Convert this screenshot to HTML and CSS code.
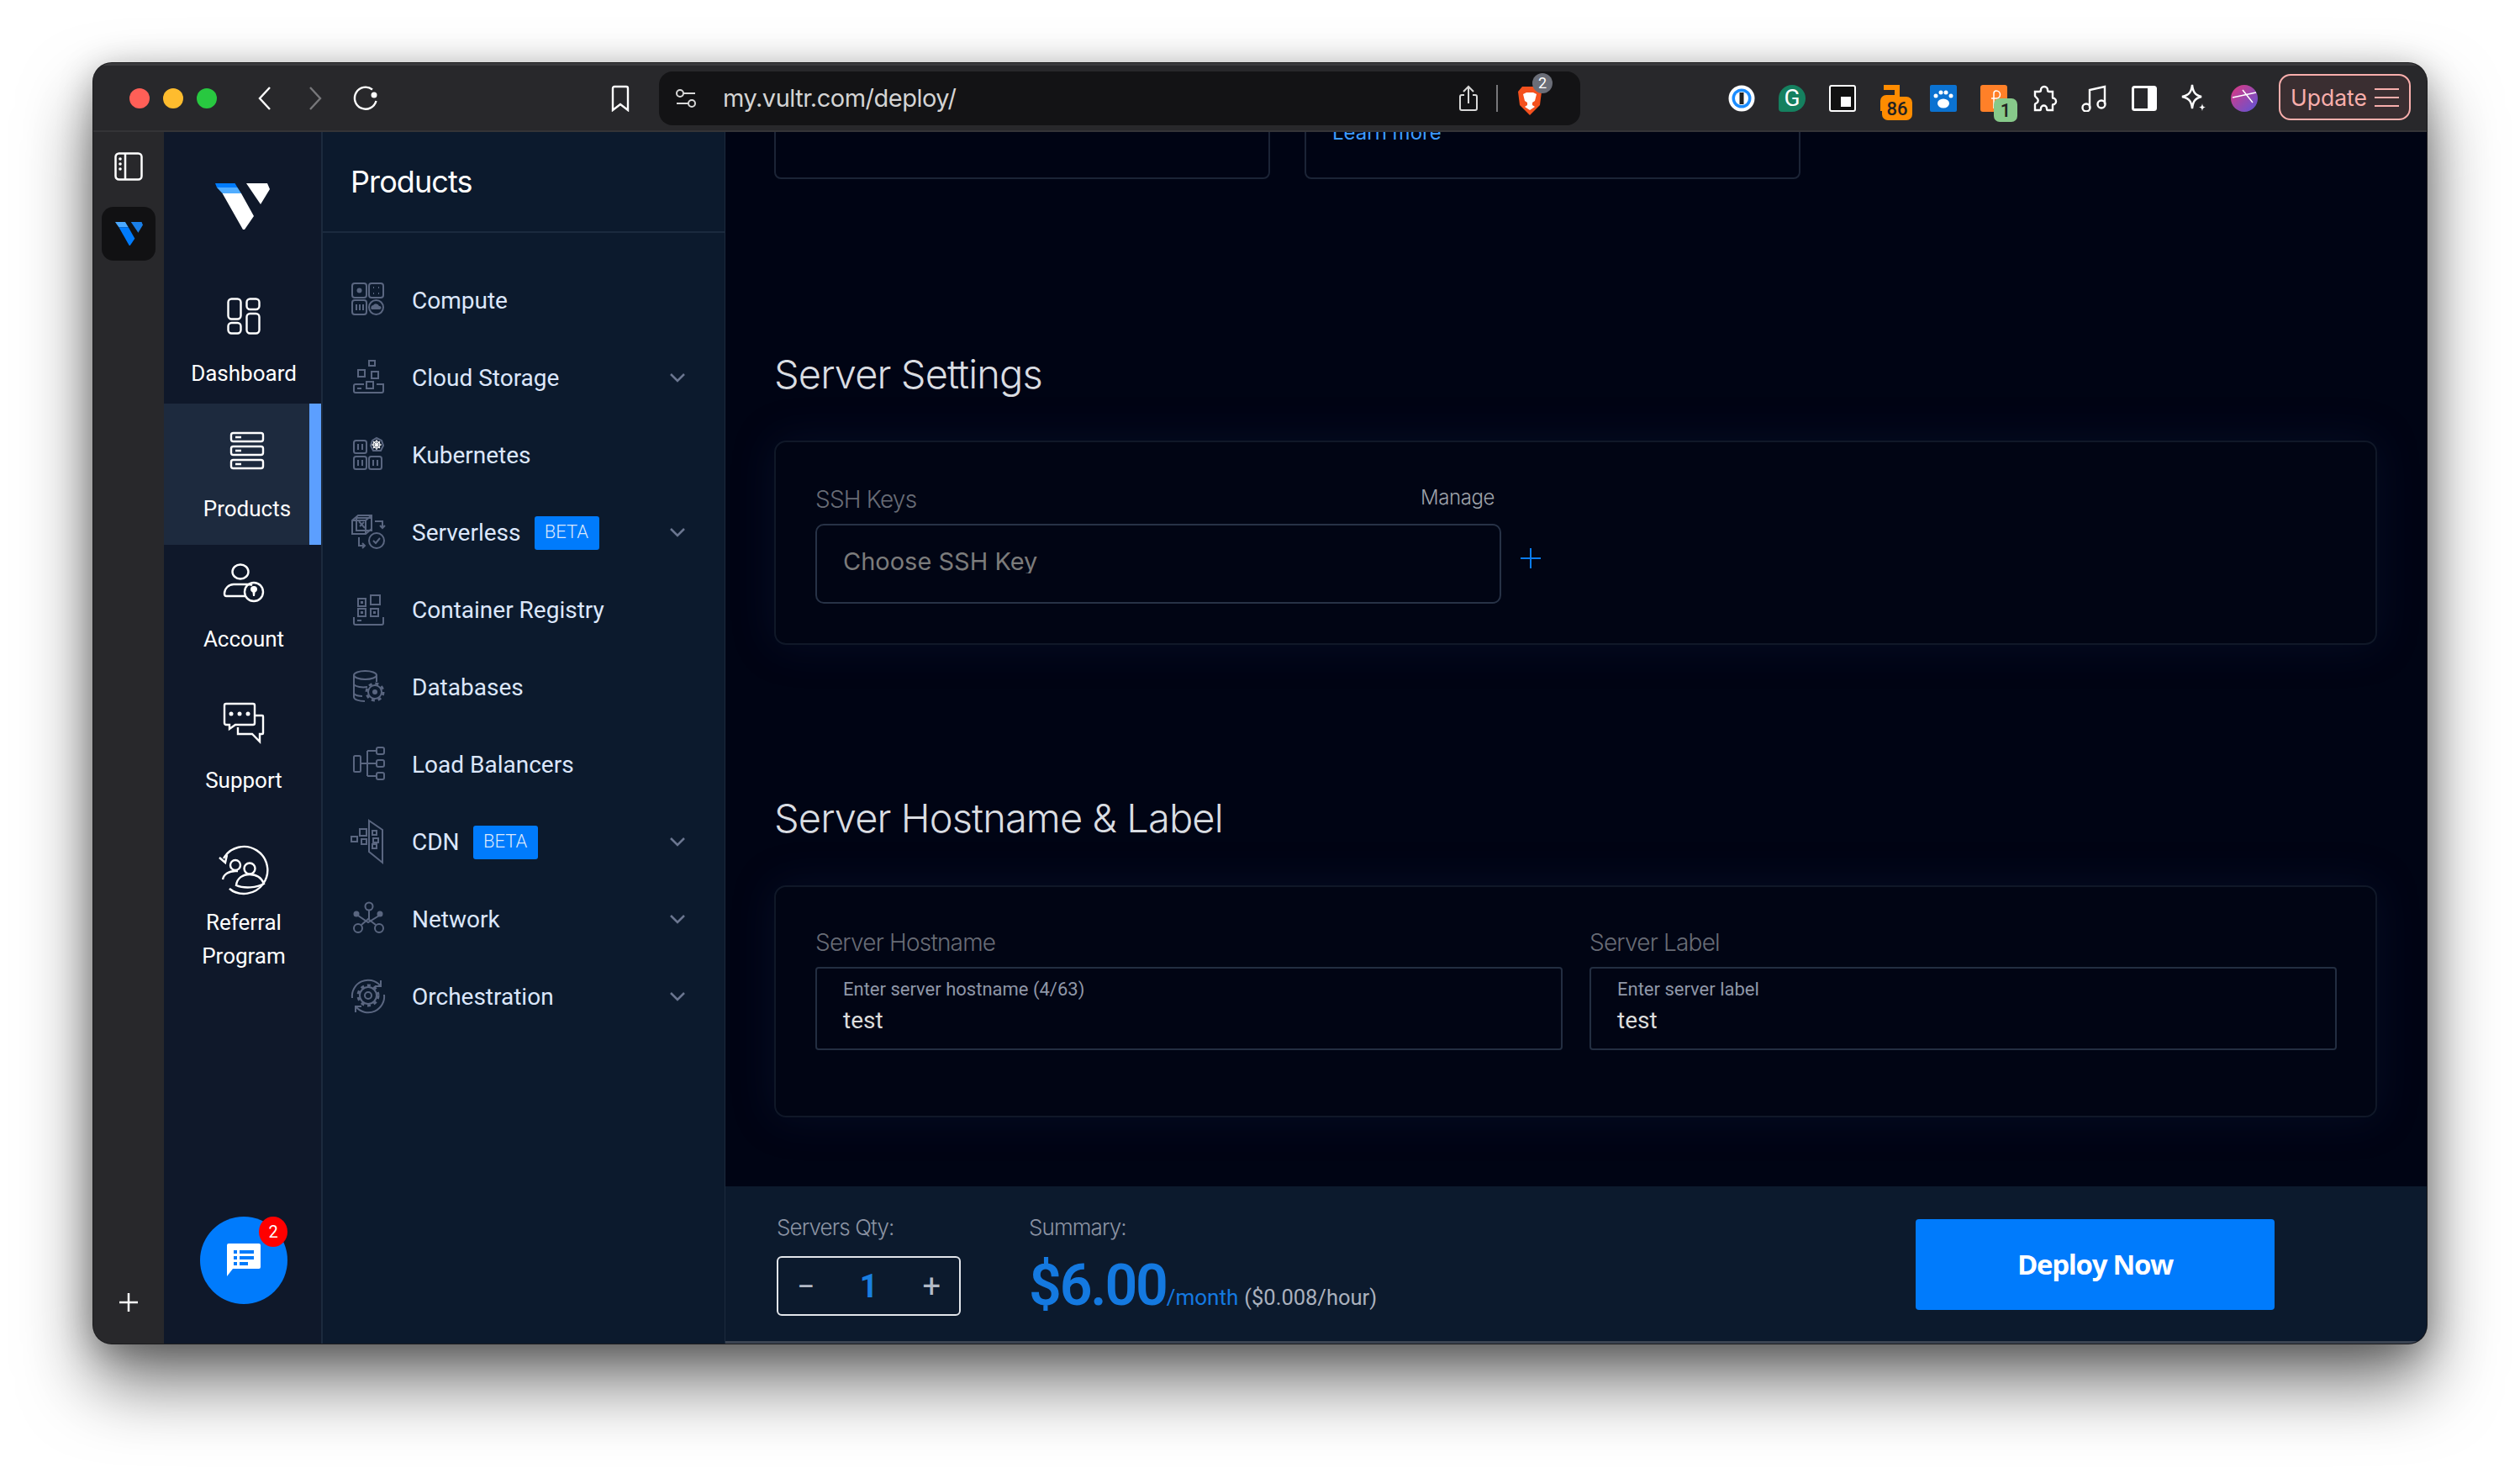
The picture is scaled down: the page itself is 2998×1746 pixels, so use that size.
FILE: index.html
```html
<!DOCTYPE html>
<html>
<head>
  <meta charset="utf-8">
  <meta name="viewport" content="width=device-width">
  <title>Deploy</title>
  <link rel="stylesheet" href="styles.css">
</head>
<body>
  <section class="window">
    <header class="toolbar">
      <div class="lights">
        <span class="light light_red"></span>
        <span class="light light_yellow"></span>
        <span class="light light_green"></span>
      </div>
      <svg class="tool tool_back" width="18" height="30" viewBox="0 0 18 30"><path d="M15 2L3 15l12 13"/></svg>
      <svg class="tool tool_forward" width="18" height="30" viewBox="0 0 18 30"><path d="M3 2l12 13L3 28"/></svg>
      <svg class="tool tool_reload" width="32" height="32" viewBox="0 0 32 32"><path d="M24 5.5A13 13 0 1 0 28.500 19"/><circle class="fill" cx="26" cy="12" r="3.500"/></svg>
      <svg class="tool tool_bookmark" width="24" height="32" viewBox="0 0 24 32"><path d="M3 4a2 2 0 0 1 2-2h14a2 2 0 0 1 2 2v26l-9-7-9 7z"/></svg>
      <div class="urlbar">
        <svg class="tool" width="26" height="24" viewBox="0 0 26 24"><circle cx="6" cy="6" r="4"/><path d="M10 6h14M2 18h14"/><circle cx="20" cy="18" r="4"/></svg>
        <span class="url">my.vultr.com/deploy/</span>
        <svg class="tool tool_share" width="24" height="32" viewBox="0 0 24 32"><path d="M7 12H4a2 2 0 0 0-2 2v14a2 2 0 0 0 2 2h16a2 2 0 0 0 2-2V14a2 2 0 0 0-2-2h-3M12 22V2M6 8l6-6 6 6"/></svg>
        <span class="urlbar_sep"></span>
        <span class="brave">
          <svg width="32" height="36" viewBox="0 0 32 36"><path fill="#f4511e" d="M7 1h18l5 6-2 16-12 12L4 23 2 7z"/><path fill="#fff" d="M8 10l4-2h8l4 2-2 8-3 2v3l3 2-6 4-6-4 3-2v-3l-3-2z"/></svg>
          <span class="brave_count">2</span>
        </span>
      </div>
      <div class="extensions">
        <svg class="ext" width="32" height="32" viewBox="0 0 32 32"><circle cx="16" cy="16" r="15.500" fill="#fff"/><circle cx="16" cy="16" r="11.500" fill="#1a8cff"/><circle cx="16" cy="16" r="8" fill="#fff"/><rect x="13.500" y="9" width="5" height="14" fill="#222"/></svg>
        <span class="ext ext_grammarly">G</span>
        <svg class="ext" width="32" height="32" viewBox="0 0 32 32"><rect x="1" y="1" width="30" height="30" rx="2" fill="#111" stroke="#fff" stroke-width="2"/><rect x="14" y="14" width="12" height="12" fill="#fff"/></svg>
        <span class="ext ext_rss">
          <svg width="26" height="34" viewBox="0 0 26 34"><path fill="none" stroke="#ff8c00" stroke-width="6" d="M5 3h16v12H8a4 4 0 0 0-4 4v12"/></svg>
          <span class="ext_badge ext_badge_orange">86</span>
        </span>
        <svg class="ext" width="32" height="32" viewBox="0 0 32 32"><rect width="32" height="32" rx="2" fill="#0b72d1"/><ellipse cx="16" cy="22" rx="7" ry="5.500" fill="#fff"/><circle cx="7" cy="13" r="2.500" fill="#fff"/><circle cx="13" cy="9" r="2.500" fill="#fff"/><circle cx="19" cy="9" r="2.500" fill="#fff"/><circle cx="25" cy="13" r="2.500" fill="#fff"/></svg>
        <span class="ext ext_orange">
          <svg width="32" height="32" viewBox="0 0 32 32"><rect width="32" height="32" rx="3" fill="#ff8028"/><path fill="none" stroke="#fff" stroke-width="1.500" d="M16 28V10a3 3 0 0 1 3-3 3 3 0 0 1 0 9h-6"/></svg>
          <span class="ext_badge ext_badge_green">1</span>
        </span>
        <svg class="ext tool" width="32" height="32" viewBox="0 0 32 32"><path d="M12 6a4 4 0 0 1 8 0c0 1 1 2 2 2h4v7c0 1 1 1 2 1a4 4 0 0 1 0 7c-1 0-2 0-2 1v6h-6c-1 0-1-1-1-2a3.500 3.500 0 0 0-7 0c0 1 0 2-1 2H5v-7c0-1 1-1 2-1.500a3.500 3.500 0 0 0 0-6C6 14 5 14 5 13V8h5c1 0 2-1 2-2z"/></svg>
        <svg class="ext tool" width="32" height="32" viewBox="0 0 32 32"><circle cx="6" cy="27" r="4.500"/><circle cx="24" cy="23" r="4.500"/><path d="M10 27V6l18-4v21"/></svg>
        <svg class="ext" width="30" height="30" viewBox="0 0 30 30"><rect x="1.500" y="1.500" width="27" height="27" rx="2" fill="none" stroke="#fff" stroke-width="3"/><rect x="19" y="1.500" width="9.500" height="27" fill="#fff"/></svg>
        <svg class="ext tool" width="32" height="36" viewBox="0 0 32 36"><path d="M14 2c1 8 3 12 11 14-8 2-10 6-11 14-1-8-3-12-12-14C11 14 13 10 14 2z"/><path class="fill" d="M26 24c.5 3 1 4 4 4.500-3 .5-3.500 1.500-4 5-.5-3.500-1-4.500-4-5 3-.5 3.500-1.500 4-4.500z"/></svg>
        <svg class="ext" width="32" height="32" viewBox="0 0 32 32"><defs><linearGradient id="av" x1="0" y1="0" x2="1" y2="1"><stop offset="0" stop-color="#e0387f"/><stop offset="1" stop-color="#5a55d8"/></linearGradient></defs><circle cx="16" cy="16" r="16" fill="url(#av)"/><path d="M2 15L30 9M14 6l12 15" stroke="#fff" stroke-width="1.500" fill="none"/></svg>
      </div>
      <div class="update">
        <span>Update</span>
        <span class="update_lines"><i></i><i></i><i></i></span>
      </div>
    </header>

    <div class="body">
      <aside class="strip">
        <svg class="strip_toggle" width="34" height="34" viewBox="0 0 34 34"><rect x="1.500" y="1.500" width="31" height="31" rx="4"/><path d="M13 2v30"/><circle class="dot" cx="7" cy="8" r="1.800"/><circle class="dot" cx="7" cy="14" r="1.800"/><circle class="dot" cx="7" cy="20" r="1.800"/></svg>
        <div class="strip_tab">
          <svg width="33" height="28" viewBox="0 0 65 55"><path fill="#4aa8ff" d="M0 0h23.500L31 12H8.600z"/><path fill="#007bfc" d="M8.600 12H31l15 27-11 16h-2z"/><path fill="#1a7fe8" d="M37 0h25l3 7-11 18z"/></svg>
        </div>
        <svg class="strip_plus" width="22" height="22" viewBox="0 0 22 22"><path d="M11 0v22M0 11h22"/></svg>
      </aside>

      <nav class="nav">
        <svg class="nav_logo" width="65" height="55" viewBox="0 0 65 55"><path fill="#007bfc" d="M0 0h23.500l3 5H2z"/><path fill="#51adff" d="M2 5h24.500l4.500 7H8.600z"/><path fill="#fff" d="M8.600 12H31l15 27-11 16h-2zM37 0h25l3 7-11 18z"/></svg>

        <a class="nav_item nav_item_dashboard">
          <svg class="nav_icon" width="40" height="44" viewBox="0 0 40 44"><rect x="1.500" y="1.500" width="15" height="24" rx="4"/><rect x="1.500" y="30" width="15" height="12.500" rx="4"/><rect x="23.500" y="1.500" width="15" height="12.500" rx="4"/><rect x="23.500" y="19" width="15" height="23.500" rx="4"/></svg>
          <span>Dashboard</span>
        </a>
        <a class="nav_item nav_item_active">
          <svg class="nav_icon" width="40" height="44" viewBox="0 0 40 44"><rect x="1" y="1" width="38" height="10" rx="2.500"/><rect x="1" y="17" width="38" height="10" rx="2.500"/><rect x="1" y="33" width="38" height="10" rx="2.500"/><path d="M6 6h7M6 22h7M6 38h7"/></svg>
          <span>Products</span>
        </a>
        <a class="nav_item nav_item_account">
          <svg class="nav_icon" width="48" height="44" viewBox="0 0 48 44"><ellipse cx="20" cy="9" rx="9.500" ry="8.500"/><path d="M27 38H3c-2 0-2-2-2-3 0-6 5-11 11-11h16c2 0 4 0 6 1"/><circle cx="36" cy="33" r="11"/><path class="fill" d="M32 30a4 4 0 0 1 8 0c0 2-1.500 3-2.500 3.500L37 38h-2l-.5-4.500C33.500 33 32 32 32 30z"/></svg>
          <span>Account</span>
        </a>
        <a class="nav_item nav_item_support">
          <svg class="nav_icon" width="48" height="48" viewBox="0 0 48 48"><path d="M3 1h32a2 2 0 0 1 2 2v21a2 2 0 0 1-2 2H14l-7 5v-5H3a2 2 0 0 1-2-2V3a2 2 0 0 1 2-2z"/><path d="M37 15h9a1 1 0 0 1 1 1v20a1 1 0 0 1-1 1h-3v9l-9-9H17v-8"/><circle class="fill" cx="9" cy="13" r="2.500"/><circle class="fill" cx="19" cy="13" r="2.500"/><circle class="fill" cx="29" cy="13" r="2.500"/></svg>
          <span>Support</span>
        </a>
        <a class="nav_item nav_item_referral">
          <svg class="nav_icon" width="60" height="60" viewBox="0 0 60 60"><path d="M6 16A28 28 0 1 1 13 52c3 3 9 6 17 6"/><path d="M1 15l7 6 2-9"/><circle cx="20" cy="24" r="6"/><circle cx="37" cy="28" r="6.500"/><path d="M5 41c1-6 7-10 15-10h3M21 48c1-9 8-13 16-13s14 4 17 11c-8 5-24 6-33 2z"/></svg>
          <span>Referral<br>Program</span>
        </a>

        <div class="chat">
          <svg width="40" height="40" viewBox="0 0 40 40"><path fill="#fff" d="M2 0h36a2 2 0 0 1 2 2v26a2 2 0 0 1-2 2H7l-7 9V2a2 2 0 0 1 2-2z"/><path fill="#007bfc" d="M8 8h4v4H8zM15 8h17v4H15zM8 15h4v4H8zM15 15h17v4H15zM8 22h4v4H8zM15 22h10v4H15z"/></svg>
          <span class="chat_count">2</span>
        </div>
      </nav>

      <aside class="panel">
        <div class="panel_title">Products</div>
        <ul class="menu">
          <li class="menu_row">
            <svg class="menu_icon" width="40" height="40" viewBox="0 0 40 40"><rect x="1" y="0" width="17" height="17" rx="3"/><rect x="21" y="0" width="17" height="17" rx="3"/><rect x="1" y="20" width="17" height="17" rx="3"/><circle cx="29.500" cy="28.500" r="8.500"/><circle class="fill" cx="9.500" cy="8.500" r="3"/><path d="M26 5h1M32 5h1M26 12h1M32 12h1M6 25v7M10 25v7M14 25v7"/><path class="fill" d="M24 31a3 3 0 0 1 2-5 4 4 0 0 1 7 1 2 2 0 0 1 1 4z"/></svg>
            <span>Compute</span>
          </li>
          <li class="menu_row">
            <svg class="menu_icon" width="40" height="40" viewBox="0 0 40 40"><rect x="21" y="0" width="7" height="6"/><rect x="8" y="11" width="8" height="8"/><rect x="24" y="13" width="8" height="8"/><rect x="18" y="25" width="8" height="8"/><path d="M15 28H5a2 2 0 0 0-2 2v6a2 2 0 0 0 2 2h31a2 2 0 0 0 2-2v-8h-8M7 33h5"/></svg>
            <span>Cloud Storage</span>
            <svg class="menu_arrow" width="18" height="12" viewBox="0 0 18 12"><path d="M1 2l8 8 8-8"/></svg>
          </li>
          <li class="menu_row">
            <svg class="menu_icon" width="40" height="40" viewBox="0 0 40 40"><rect x="3" y="3" width="15" height="15" rx="2.500"/><rect x="3" y="22" width="15" height="15" rx="2.500"/><rect x="21" y="22" width="15" height="15" rx="2.500"/><path d="M8 7v7M13 7v7M8 26v7M13 26v7M26 26v7M31 26v7"/><path fill="#6b7690" stroke="none" d="M30 0l6 3 2 6-3 6h-9l-3-6 2-6z"/><circle cx="30" cy="8" r="4" class="wheel"/><path class="wheel" d="M30 2v12M24 8h12M26 4l8 8M34 4l-8 8"/></svg>
            <span>Kubernetes</span>
          </li>
          <li class="menu_row">
            <svg class="menu_icon" width="40" height="40" viewBox="0 0 40 40"><path d="M1 6l7-6h16v16l-7 6H1zM1 6h16v16M17 6l7-6"/><rect x="6" y="3" width="18" height="15"/><path d="M9 7l7 8M15 8l-5 5"/><path d="M28 7h9v8M34 12l3 3 3-3"/><path d="M9 26v10h7M13 33l3 3-3 3"/><circle cx="30" cy="30" r="9"/><path d="M26 30l3 3 5-6"/></svg>
            <span>Serverless</span>
            <span class="beta">BETA</span>
            <svg class="menu_arrow" width="18" height="12" viewBox="0 0 18 12"><path d="M1 2l8 8 8-8"/></svg>
          </li>
          <li class="menu_row">
            <svg class="menu_icon" width="40" height="40" viewBox="0 0 40 40"><rect x="8" y="7" width="9" height="9"/><rect x="23" y="3" width="11" height="11"/><rect x="8" y="19" width="9" height="9"/><rect x="23" y="19" width="9" height="9"/><path class="fill" d="M11 10h3v3h-3zM11 22h3v3h-3zM26 22h3v3h-3z"/><path d="M3 29v7a2 2 0 0 0 2 2h31a2 2 0 0 0 2-2v-7M7 33h5"/></svg>
            <span>Container Registry</span>
          </li>
          <li class="menu_row">
            <svg class="menu_icon" width="40" height="40" viewBox="0 0 40 40"><ellipse cx="16.500" cy="6" rx="13.500" ry="5"/><path d="M3 6v26c0 3 6 5 13 5M30 6v8M3 17c2 3 10 4 16 3M3 28c2 2 6 3 10 3"/><circle cx="28" cy="26" r="8"/><circle cx="28" cy="26" r="10" class="teeth"/><circle class="fill" cx="28" cy="26" r="3"/></svg>
            <span>Databases</span>
          </li>
          <li class="menu_row">
            <svg class="menu_icon" width="40" height="40" viewBox="0 0 40 40"><rect x="3" y="10" width="8" height="19" rx="1.500"/><path d="M11 19h8M19 4v30M19 4h11M19 19h11M19 34h11"/><rect x="30" y="0" width="9" height="8" rx="2"/><rect x="30" y="15" width="9" height="8" rx="2"/><rect x="30" y="30" width="9" height="8" rx="2"/></svg>
            <span>Load Balancers</span>
          </li>
          <li class="menu_row">
            <svg class="menu_icon" width="40" height="40" viewBox="0 0 40 40"><path d="M21 -5l16 11v39L21 32z"/><rect x="25" y="7" width="5" height="5"/><rect x="26" y="16" width="6" height="5"/><rect x="25" y="23" width="5" height="5"/><rect x="10" y="5" width="8" height="8"/><rect x="0" y="14" width="7" height="6"/><rect x="12" y="17" width="6" height="6"/></svg>
            <span>CDN</span>
            <span class="beta">BETA</span>
            <svg class="menu_arrow" width="18" height="12" viewBox="0 0 18 12"><path d="M1 2l8 8 8-8"/></svg>
          </li>
          <li class="menu_row">
            <svg class="menu_icon" width="40" height="40" viewBox="0 0 40 40"><circle cx="21" cy="5" r="4.500"/><circle class="fill" cx="6" cy="14" r="3.500"/><circle class="fill" cx="34" cy="14" r="3.500"/><circle cx="8" cy="31" r="5"/><circle cx="33" cy="31" r="5"/><path d="M21 10v10M8 16l12 8 13-8M12 27l8-7 9 7"/></svg>
            <span>Network</span>
            <svg class="menu_arrow" width="18" height="12" viewBox="0 0 18 12"><path d="M1 2l8 8 8-8"/></svg>
          </li>
          <li class="menu_row">
            <svg class="menu_icon" width="40" height="40" viewBox="0 0 40 40"><path d="M1 22A19 19 0 0 1 34 7M39 18A19 19 0 0 1 6 33M35 1v7h-7M5 39v-7h7"/><circle cx="20" cy="19" r="10"/><circle cx="20" cy="19" r="12" class="teeth"/><circle cx="20" cy="19" r="4"/></svg>
            <span>Orchestration</span>
            <svg class="menu_arrow" width="18" height="12" viewBox="0 0 18 12"><path d="M1 2l8 8 8-8"/></svg>
          </li>
        </ul>
      </aside>

      <main class="content">
        <div class="scroller">
          <div class="topCards">
            <div class="topCard"></div>
            <div class="topCard"><a class="learn">Learn more</a></div>
          </div>

          <h2 class="heading heading_first">Server Settings</h2>
          <div class="card card_ssh">
            <div class="sshField">
              <div class="sshField_head">
                <label class="label">SSH Keys</label>
                <a class="manage">Manage</a>
              </div>
              <div class="select"><span class="select_text">Choose SSH Key</span></div>
            </div>
            <svg class="addKey" width="24" height="24" viewBox="0 0 24 24"><path d="M12 0v24M0 12h24"/></svg>
          </div>

          <h2 class="heading heading_second">Server Hostname &amp; Label</h2>
          <div class="card card_host">
            <div class="field">
              <label class="label">Server Hostname</label>
              <div class="input">
                <div class="input_hint">Enter server hostname (4/63)</div>
                <div class="input_value">test</div>
              </div>
            </div>
            <div class="field">
              <label class="label">Server Label</label>
              <div class="input">
                <div class="input_hint">Enter server label</div>
                <div class="input_value">test</div>
              </div>
            </div>
          </div>
        </div>

        <footer class="footer">
          <div class="qty">
            <div class="footer_label">Servers Qty:</div>
            <div class="qty_box">
              <span class="qty_btn">&minus;</span>
              <span class="qty_num">1</span>
              <span class="qty_btn">+</span>
            </div>
          </div>
          <div class="summary">
            <div class="footer_label">Summary:</div>
            <div class="summary_price">
              <span class="price">$6.00</span><span class="per">/month</span>
              <span class="hourly">($0.008/hour)</span>
            </div>
          </div>
          <button class="deploy">Deploy Now</button>
        </footer>
      </main>
    </div>
  </section>
</body>
</html>
```
FILE: styles.css
```css
html, body {
  margin: 0;
  height: 100%;
  background: #ffffff;
  overflow: hidden;
}

body {
  padding: 75px 0 0 111px;
  box-sizing: border-box;
  font-family: Roboto, "Liberation Sans", sans-serif;
}

ul {
  list-style: none;
  margin: 0;
  padding: 0;
}

.window {
  width: 2776px;
  height: 1523px;
  display: flex;
  flex-direction: column;
  border-radius: 22px;
  overflow: hidden;
  background: #28282b;
  box-shadow: 0 0 0 1px #1c1c1e, 0 46px 84px rgba(0, 0, 0, 0.56), 0 8px 40px rgba(0, 0, 0, 0.28);
}

/* toolbar */
.toolbar {
  flex: none;
  height: 82px;
  box-sizing: border-box;
  display: flex;
  align-items: center;
  background: #28282b;
  border-top: 3px solid #3a3a3d;
  border-bottom: 2px solid #343437;
  color: #ffffff;
  position: relative;
}

.lights {
  display: flex;
  gap: 16px;
  margin-left: 43px;
}
.light {
  width: 24px;
  height: 24px;
  border-radius: 50%;
}
.light_red { background: #ff5f57; }
.light_yellow { background: #febc2e; }
.light_green { background: #28c840; }

.tool path, .tool circle {
  fill: none;
  stroke: #ffffff;
  stroke-width: 2.4;
}
.tool .fill {
  fill: #ffffff;
  stroke: none;
}
.tool_back { margin-left: 48px; }
.tool_forward { margin-left: 42px; }
.tool_forward path { stroke: #77777a; }
.tool_reload { margin-left: 35px; }
.tool_bookmark { margin-left: 275px; }

.urlbar {
  width: 1096px;
  height: 64px;
  margin-left: 34px;
  padding: 0 20px 0 19px;
  box-sizing: border-box;
  display: flex;
  align-items: center;
  background: #131315;
  border-radius: 16px;
}
.urlbar .tool path, .urlbar .tool circle {
  stroke: #d8d8d8;
  stroke-width: 2;
}
.url {
  margin-left: 31px;
  font-family: Inter, sans-serif;
  font-size: 29px;
  color: #d4d4d4;
  letter-spacing: -0.5px;
}
.tool_share { margin-left: auto; }
.urlbar_sep {
  width: 2px;
  height: 32px;
  margin: 0 22px 0 21px;
  background: #77777a;
}
.brave {
  position: relative;
  display: flex;
  margin-right: 24px;
  margin-top: 6px;
}
.brave_count {
  position: absolute;
  left: 19px;
  top: -15px;
  width: 24px;
  height: 24px;
  border-radius: 50%;
  background: #6b6e78;
  color: #ffffff;
  font-size: 18px;
  line-height: 24px;
  text-align: center;
}

.extensions {
  display: flex;
  align-items: center;
  margin-left: 176px;
  gap: 28px;
}
.ext {
  flex: none;
  display: block;
}
.ext_grammarly {
  width: 32px;
  height: 32px;
  border-radius: 50% 50% 50% 4px;
  background: #15805f;
  color: #ffffff;
  font-size: 28px;
  font-weight: 400;
  line-height: 32px;
  text-align: center;
}
.ext_rss, .ext_orange {
  position: relative;
  width: 32px;
  height: 32px;
}
.ext_rss svg, .ext_orange svg {
  display: block;
}
.ext_badge {
  position: absolute;
  height: 28px;
  border-radius: 7px;
  color: #222222;
  font-size: 22px;
  font-weight: 500;
  line-height: 30px;
  text-align: center;
}
.ext_badge_orange {
  left: 3px;
  top: 14px;
  width: 36px;
  background: #ff8c00;
}
.ext_badge_green {
  left: 16px;
  top: 16px;
  width: 28px;
  background: #87c98a;
}

.update {
  position: absolute;
  left: 2600px;
  top: 10px;
  width: 157px;
  height: 55px;
  box-sizing: border-box;
  display: flex;
  align-items: center;
  justify-content: center;
  gap: 9px;
  border: 2px solid #f8aeac;
  border-radius: 14px;
  background: #3a2e31;
  color: #f8aeac;
  font-family: Inter, sans-serif;
  font-size: 26.5px;
}
.update_lines {
  display: flex;
  flex-direction: column;
  gap: 8px;
}
.update_lines i {
  display: block;
  width: 29px;
  height: 2px;
  background: #f8aeac;
}

/* app area */
.body {
  flex: 1;
  min-height: 0;
  display: flex;
}

.strip {
  flex: none;
  width: 84px;
  display: flex;
  flex-direction: column;
  align-items: center;
  background: #28282b;
}
.strip_toggle {
  margin-top: 24px;
}
.strip_toggle rect, .strip_toggle path {
  fill: none;
  stroke: #ffffff;
  stroke-width: 2.500;
}
.strip_toggle .dot {
  fill: #ffffff;
}
.strip_tab {
  width: 64px;
  height: 64px;
  margin-top: 31px;
  display: flex;
  align-items: center;
  justify-content: center;
  border-radius: 14px;
  background: #111113;
}
.strip_plus {
  margin-top: auto;
  margin-bottom: 38px;
}
.strip_plus path {
  stroke: #ffffff;
  stroke-width: 2.500;
}

.nav {
  flex: none;
  width: 187px;
  display: flex;
  flex-direction: column;
  background: #0f182a;
  color: #ffffff;
  font-size: 26px;
  line-height: 40px;
}
.nav_logo {
  flex: none;
  margin: 61px 0 39px 61px;
}
.nav_item {
  display: flex;
  flex-direction: column;
  align-items: center;
  padding-left: 3px;
  text-align: center;
}
.nav_icon {
  flex: none;
  overflow: visible;
}
.nav_icon rect, .nav_icon path, .nav_icon circle, .nav_icon ellipse {
  fill: none;
  stroke: #ffffff;
  stroke-width: 2.400;
}
.nav_icon .fill {
  fill: #ffffff;
  stroke: none;
}
.nav_item_dashboard {
  height: 168px;
  box-sizing: border-box;
  padding-top: 42px;
  gap: 26px;
}
.nav_item_active {
  height: 168px;
  box-sizing: border-box;
  padding: 34px 0 0 25px;
  gap: 27px;
  background: #1d2a3e;
  border-right: 14px solid #5c9fff;
}
.nav_item_account {
  padding-top: 23px;
  gap: 25px;
}
.nav_item_support {
  margin-top: 56px;
  gap: 24px;
}
.nav_item_referral {
  margin-top: 57px;
  gap: 12px;
}

.chat {
  position: relative;
  width: 104px;
  height: 104px;
  margin: auto 0 47px 43px;
  display: flex;
  align-items: center;
  justify-content: center;
  border-radius: 50%;
  background: #007bfc;
}
.chat_count {
  position: absolute;
  right: 0;
  top: 0;
  width: 34px;
  height: 36px;
  border-radius: 50%;
  background: #ff0000;
  font-size: 20px;
  line-height: 36px;
  text-align: center;
}

.panel {
  flex: none;
  width: 481px;
  box-sizing: border-box;
  background: #0c1a2d;
  border-left: 2px solid #1c2a3d;
  border-right: 1px solid #1c2a3d;
}
.panel_title {
  height: 120px;
  box-sizing: border-box;
  padding-left: 33px;
  border-bottom: 2px solid #1b2a3e;
  color: #ffffff;
  font-family: Inter, sans-serif;
  font-size: 36px;
  line-height: 118px;
  letter-spacing: -0.9px;
}
.menu {
  padding-top: 34px;
}
.menu_row {
  height: 92px;
  display: flex;
  align-items: center;
  padding-left: 34px;
  color: #dce7fb;
  font-size: 28px;
}
.menu_icon {
  flex: none;
  margin-right: 32px;
  overflow: visible;
}
.menu_icon rect, .menu_icon path, .menu_icon circle, .menu_icon ellipse {
  fill: none;
  stroke: #5a6680;
  stroke-width: 2;
}
.menu_icon .fill {
  fill: #5a6680;
  stroke: none;
}
.menu_icon .wheel {
  stroke: #ffffff;
  stroke-width: 1.200;
}
.menu_icon .teeth {
  stroke-width: 3;
  stroke-dasharray: 4 3.860;
}
.menu_arrow {
  margin-left: auto;
  margin-right: 47px;
}
.menu_arrow path {
  fill: none;
  stroke: #6b7690;
  stroke-width: 2.500;
}
.beta {
  width: 77px;
  height: 40px;
  margin: 2px 0 0 16px;
  border-radius: 3px;
  background: #007bfc;
  color: #dce7fb;
  font-size: 22px;
  font-weight: 300;
  line-height: 38px;
  text-align: center;
}

/* main */
.content {
  flex: 1;
  min-width: 0;
  display: flex;
  flex-direction: column;
  background: #000414;
}
.scroller {
  flex: 1;
  min-height: 0;
  overflow: hidden;
  padding: 0 59px 0 58px;
}
.topCards {
  display: flex;
  gap: 41px;
  margin-top: -44px;
}
.topCard {
  width: 590px;
  height: 100px;
  box-sizing: border-box;
  padding: 28px 0 0 31px;
  border: 2px solid #1b2436;
  border-radius: 8px;
}
.learn {
  color: #3d9bff;
  font-family: Inter, sans-serif;
  font-size: 24px;
  line-height: 30px;
}
.heading {
  margin: 0;
  color: #dadde2;
  font-family: Inter, sans-serif;
  font-size: 47px;
  font-weight: 300;
  line-height: 60px;
  letter-spacing: -0.9px;
}
.heading_first {
  margin-top: 202px;
}
.heading_second {
  margin-top: 176px;
}
.card {
  box-sizing: border-box;
  margin-top: 49px;
  padding: 48px 0 0 47px;
  border: 2px solid #101828;
  border-radius: 14px;
  background: #010514;
  box-shadow: 0 0 50px rgba(22, 40, 84, 0.28);
}
.card_ssh {
  height: 243px;
  display: flex;
}
.card_host {
  height: 276px;
  margin-top: 50px;
  padding-top: 46px;
  display: flex;
  gap: 32px;
}
.sshField {
  width: 816px;
}
.sshField_head {
  height: 40px;
  margin-bottom: 9px;
  display: flex;
  align-items: center;
  justify-content: space-between;
  padding-right: 8px;
}
.label {
  color: #686c76;
  font-family: Inter, sans-serif;
  font-size: 28px;
  font-weight: 300;
  line-height: 40px;
  letter-spacing: -0.8px;
}
.manage {
  margin-top: -6px;
  color: #9ea2aa;
  font-family: Inter, sans-serif;
  font-size: 24px;
  font-weight: 300;
  letter-spacing: -0.4px;
}
.select {
  height: 95px;
  box-sizing: border-box;
  padding: 26px 0 0 31px;
  border: 2px solid #273246;
  border-radius: 10px;
}
.select_text {
  display: block;
  height: 31px;
  overflow: hidden;
  color: #7b7b7b;
  font-family: Inter, sans-serif;
  font-size: 29px;
  line-height: 34px;
}
.addKey {
  flex: none;
  margin: 78px 0 0 23px;
}
.addKey path {
  stroke: #0a7cf0;
  stroke-width: 2;
}
.field {
  width: 889px;
}
.field .label {
  display: block;
  margin-bottom: 9px;
}
.input {
  height: 99px;
  box-sizing: border-box;
  padding: 11px 0 0 31px;
  border: 2px solid #232e41;
  border-radius: 4px;
}
.input_hint {
  color: #8f97a8;
  font-size: 22px;
  line-height: 28px;
}
.input_value {
  margin-top: 5px;
  color: #dcdcdc;
  font-size: 28px;
  line-height: 36px;
}

/* footer */
.footer {
  flex: none;
  height: 187px;
  box-sizing: border-box;
  display: flex;
  padding: 32px 0 0 61px;
  background: #0c1a2d;
  border-bottom: 3px solid #3b4452;
}
.footer_label {
  color: #8b93a3;
  font-family: Inter, sans-serif;
  font-size: 26px;
  font-weight: 300;
  line-height: 34px;
  letter-spacing: -0.9px;
}
.qty_box {
  width: 219px;
  height: 71px;
  margin-top: 17px;
  box-sizing: border-box;
  display: flex;
  align-items: center;
  justify-content: space-between;
  padding: 0 22px 0 22px;
  border: 2px solid #e2e5ea;
  border-radius: 6px;
}
.qty_btn {
  color: #b3bac6;
  font-size: 38px;
  line-height: 40px;
}
.qty_num {
  color: #1a7fe0;
  font-size: 38px;
  font-weight: 700;
}
.summary {
  margin-left: 81px;
}
.summary_price {
  display: flex;
  align-items: baseline;
  margin-top: 10px;
}
.price {
  color: #1479e0;
  font-size: 68px;
  font-weight: 600;
  line-height: 84px;
  letter-spacing: -2.2px;
}
.per {
  color: #1479e0;
  font-size: 26px;
}
.hourly {
  margin-left: 7px;
  color: #aab1bd;
  font-size: 25.5px;
}
.deploy {
  width: 427px;
  height: 108px;
  margin: 7px 181px 0 auto;
  padding-bottom: 3px;
  border: none;
  border-radius: 4px;
  background: #007bfc;
  color: #ffffff;
  font-family: "Open Sans", sans-serif;
  font-size: 33px;
  font-weight: 700;
  letter-spacing: -1.3px;
}
```
